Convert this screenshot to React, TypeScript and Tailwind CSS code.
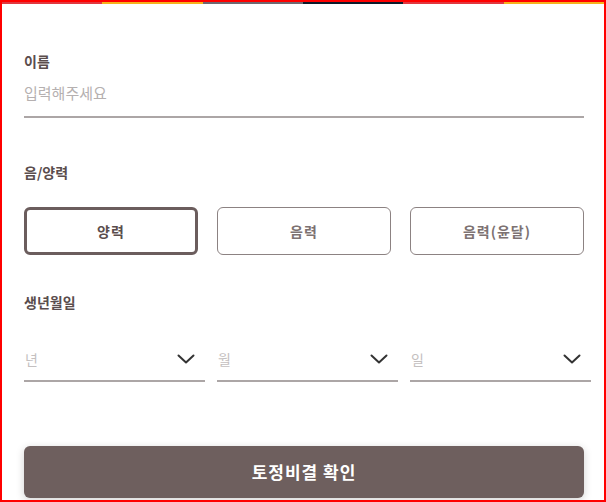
import React, { useState } from "react";

const stripe = ["bg-[#e2373f]", "bg-[#f6b21b]", "bg-[#6f6770]", "bg-[#0c1b2b]", "bg-[#e2373f]", "bg-[#f6b21b]"];

const Chevron = () => (
  <svg width="18" height="10" viewBox="0 0 18 10" fill="none" className="shrink-0">
    <path d="M1.5 1.5 9 8.5l7.5-7" stroke="#333333" strokeWidth="2" strokeLinecap="round" strokeLinejoin="round" />
  </svg>
);

const SelectBox = ({ placeholder }: { placeholder: string }) => (
  <div className="w-[181px] shrink-0 h-[44px] flex items-center justify-between pl-[1px] pr-[10px] border-b-2 border-[#aca6a6]">
    <span className="text-[14px] text-[#c4c0c0]">{placeholder}</span>
    <Chevron />
  </div>
);

export default function App() {
  const [calendar, setCalendar] = useState("양력");
  const options = ["양력", "음력", "음력(윤달)"];

  return (
    <div
      className="w-[606px] h-[502px] overflow-hidden border-2 border-[#ff0000] bg-white"
      style={{ fontFamily: '"Noto Sans CJK KR", "Noto Sans", sans-serif' }}
    >
      <div className="flex h-[2px]">
        {stripe.map((c, i) => (
          <div key={i} className={`flex-1 ${c}`} />
        ))}
      </div>

      <div className="pl-[22px] pr-[20px] pt-[47px]">
        <label className="block text-[14px] leading-[20px] font-bold text-[#5a4d4d]">이름</label>
        <div className="mt-[3px] h-[44px] pb-[4px] flex items-center border-b-2 border-[#aca6a6]">
          <span className="text-[15px] text-[#b5b0b0]">입력해주세요</span>
        </div>

        <label className="block mt-[44px] text-[14px] leading-[20px] font-bold text-[#5a4d4d]">음/양력</label>
        <div className="mt-[25px] flex gap-[19px]">
          {options.map((o) => (
            <button
              key={o}
              onClick={() => setCalendar(o)}
              className={
                calendar === o
                  ? "w-[174px] h-[48px] rounded-[6px] border-[3px] border-[#6b5d5d] text-[14px] font-bold text-[#5a4d4d]"
                  : "w-[174px] h-[48px] rounded-[6px] border border-[#8c8282] text-[14px] font-bold text-[#7d7272]"
              }
            >
              <span className="tracking-[1px]">{o}</span>
            </button>
          ))}
        </div>

        <label className="block mt-[37px] text-[14px] leading-[20px] font-bold text-[#5a4d4d]">생년월일</label>
        <div className="mt-[26px] flex gap-[12px]">
          <SelectBox placeholder="년" />
          <SelectBox placeholder="월" />
          <SelectBox placeholder="일" />
        </div>

        <button className="mt-[64px] w-[560px] h-[52px] rounded-[6px] bg-[#6e5f5e] text-white text-[17px] font-bold tracking-[1px] shadow-[0_2px_8px_rgba(0,0,0,0.18)]">
          토정비결 확인
        </button>
      </div>
    </div>
  );
}
